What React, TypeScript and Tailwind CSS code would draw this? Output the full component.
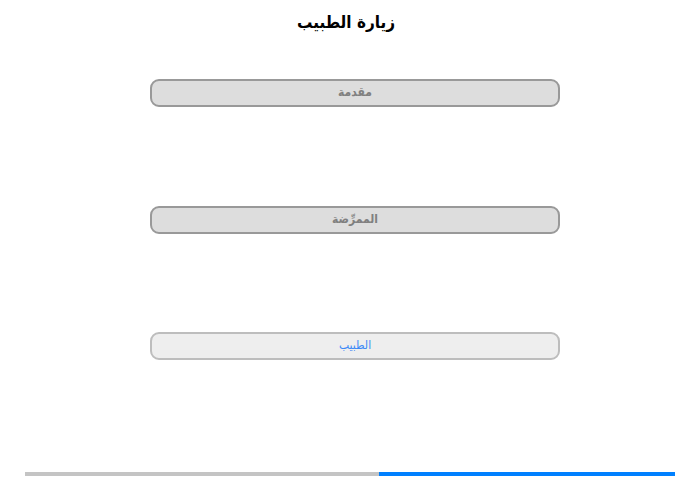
import React from 'react'

const steps = [
  { label: 'مقدمة', active: false },
  { label: 'الممرِّضة', active: false },
  { label: 'الطبيب', active: true },
]

export default function App() {
  return (
    <div
      dir="rtl"
      className="w-[700px] h-[480px] bg-white flex flex-col items-center font-['DejaVu_Sans_Condensed','DejaVu_Sans',sans-serif]"
    >
      {/* Title */}
      <h1 className="mt-[9px] h-[26px] text-[17px] font-bold text-black leading-[26px] ml-[-8px]">زيارة الطبيب</h1>

      {/* Steps */}
      <div className="mt-[44px] flex flex-col gap-[98.5px] w-[410px] mr-[-10px]">
        {steps.map((s) => (
          <div
            key={s.label}
            className={
              s.active
                ? 'h-[28px] pb-[2px] rounded-[9px] border-2 border-[#bdbdbd] bg-[#eeeeee] flex items-center justify-center text-[12px] text-[#3d8af7]'
                : 'h-[28px] pb-[2px] rounded-[9px] border-2 border-[#999999] bg-[#dddddd] flex items-center justify-center text-[12px] font-bold text-[#808080]'
            }
          >
            {s.label}
          </div>
        ))}
      </div>

      {/* Progress */}
      <div className="mt-auto mb-[4px] w-[650px] h-[4px] flex" dir="ltr">
        <div className="w-[354px] bg-[#c4c4c4]" />
        <div className="flex-1 bg-[#0080ff]" />
      </div>
    </div>
  )
}
